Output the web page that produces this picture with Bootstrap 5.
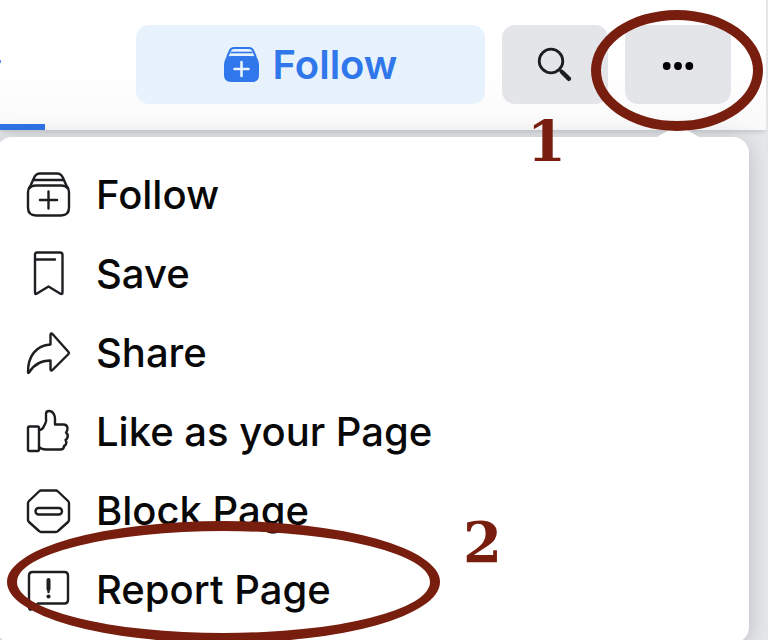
<!DOCTYPE html>
<html lang="en">
<head>
<meta charset="utf-8">
<meta name="viewport" content="width=device-width, initial-scale=1">
<title>Report a Page</title>
<link href="https://cdn.jsdelivr.net/npm/bootstrap@5.3.0/dist/css/bootstrap.min.css" rel="stylesheet">
<style>
  body { font-family: Inter, "Liberation Sans", sans-serif; background: #fff; color: #080809; }
  .shot { border-right: 2px solid #e4e5e8; margin-right: 3px; background: #e7e8ec; }
  .topbar { background: linear-gradient(#fff 55%, #f9f9f9); padding-right: 35px; box-shadow: 0 1px 6px rgba(0,0,0,.2); }
  .tab-current { width: 45px; border-bottom: 6px solid #2f74e6; }
  .tab-current::before { content: ""; width: 1px; height: 3px; margin-top: 60px; background: #5c92ec; }
  .actions { gap: 17px; padding: 25px 0 26px; margin-left: 91px; }
  .action { height: 79px; border: 0; border-radius: 13px; background: #e4e5e9; color: #080809; padding: 0; }
  .action-sm { width: 106px; }
  .action-follow { background: #e7f2fd; color: #2f77ea; font-size: 40px; font-weight: 600; line-height: 48px; gap: 14px; }
  .stage { padding: 7px 17px 20px 0; }
  .panel { background: #fff; border-radius: 16px; padding: 18px 0 14px; margin-left: -4px; box-shadow: 0 4px 24px rgba(0,0,0,.2); }
  .pointer { right: 50px; top: -11px; width: 42px; height: 11px; background: #fff; clip-path: polygon(50% 0, 60% 12%, 100% 100%, 0 100%, 40% 12%); }
  .entry { height: 79px; padding: 0 28px; gap: 24px; border: 0; background: none; color: #080809; font-size: 40px; font-weight: 500; line-height: 48px; }
  .entry svg { flex: none; fill: none; stroke: #1c1e21; stroke-width: 2.4; stroke-linejoin: round; stroke-linecap: round; }
  .ring { border: 10px solid #781e0f; border-radius: 50%; pointer-events: none; z-index: 3; }
  .ring-more { left: -34px; top: -15px; width: 172px; height: 121px; }
  .ring-report { left: 11px; top: -29px; width: 433px; height: 122px; }
  .step { color: #781e0f; font-family: "DejaVu Serif", serif; font-weight: 700; font-size: 56px; line-height: 56px; z-index: 3; }
  .step-one { left: -98px; top: 88px; }
  .step-two { left: 467px; top: -36px; }
</style>
</head>
<body class="overflow-hidden vh-100">
<div class="shot overflow-hidden min-vh-100">
  <header class="topbar d-flex position-relative">
    <a href="#" class="tab-current d-flex" aria-label="Current tab"></a>
    <div class="actions d-flex flex-grow-1">
      <button type="button" class="action action-follow flex-grow-1 d-flex align-items-center justify-content-center">
        <svg width="35" height="36" viewBox="0 0 35 36" aria-hidden="true">
          <path d="M3.5 9 6 3.5Q7.200 1 10 1H25Q27.800 1 29 3.500L31.500 9" fill="none" stroke="currentColor" stroke-width="2"/>
          <path d="M6.500 5.500H28.500" stroke="currentColor" stroke-width="1.600"/>
          <path d="M3.500 7.200H31.500L34 13Q35 15 35 18V28Q35 35 28 35H7Q0 35 0 28V18Q0 15 1 13Z" fill="currentColor"/>
          <path d="M5 8.500Q6 8 8 8H27Q29 8 30 8.500" stroke="#e7f2fd" stroke-width="1.800" fill="none"/>
          <path d="M10.500 22H24.500M17.500 15V29" stroke="#e7f2fd" stroke-width="2.600" stroke-linecap="round"/>
        </svg>
        <span>Follow</span>
      </button>
      <button type="button" class="action action-sm" aria-label="Search">
        <svg width="36" height="36" viewBox="0 0 36 36" fill="none" stroke="#1c1e21" stroke-linecap="round" aria-hidden="true">
          <circle cx="14" cy="14" r="11.800" stroke-width="2.800"/>
          <path d="M22.500 22.500 25 25" stroke-width="3"/><path d="M25 25 32 31.800" stroke-width="4.400"/>
        </svg>
      </button>
      <div class="position-relative">
        <button type="button" class="action action-sm" aria-label="More options">
          <svg width="32" height="10" viewBox="0 0 32 10" aria-hidden="true"><circle cx="4.700" cy="5" r="3.900"/><circle cx="16" cy="5" r="3.900"/><circle cx="27.300" cy="5" r="3.900"/></svg>
        </button>
        <span class="ring ring-more position-absolute"></span>
        <span class="step step-one position-absolute">1</span>
      </div>
    </div>
  </header>

  <main class="stage">
    <div class="panel position-relative">
      <span class="pointer position-absolute"></span>
      <button type="button" class="entry w-100 d-flex align-items-center text-start">
        <svg width="48" height="48" viewBox="0 0 48 48" aria-hidden="true">
          <path d="M5.500 17 10.200 6.500Q12 2.500 16 2.500H33Q37 2.500 38.800 6.500L43.500 17"/>
          <path d="M9.500 9H39.500"/>
          <path d="M5.500 17Q7.500 14.500 12 14.500H37Q41.500 14.500 43.500 17"/>
          <path d="M5.500 16Q4 18.500 4 21.500V36.500Q4 44.500 12 44.500H37Q45 44.500 45 36.500V21.500Q45 18.500 43.500 16"/>
          <path d="M16 29H33M24.500 20.500V37.500"/>
        </svg><span>Follow</span>
      </button>
      <button type="button" class="entry w-100 d-flex align-items-center text-start">
        <svg width="48" height="48" viewBox="0 0 48 48" aria-hidden="true">
          <path d="M13 2.500H36Q38.500 2.500 38.500 5V42.500Q38.500 45 36 43.500L24.500 36.500 13 43.500Q11 45 11 42.500V4.500Q11 2.500 13 2.500ZM11 9.500H31"/>
        </svg><span>Save</span>
      </button>
      <button type="button" class="entry w-100 d-flex align-items-center text-start">
        <svg width="48" height="48" viewBox="0 0 48 48" aria-hidden="true">
          <path d="M26.500 5.500V15.500C12 16.500 4 27 4 43Q4 45 5.500 43C10.500 34.500 17 31.500 26.500 31.500V40.500Q27 42.500 28.500 41L44.500 25Q45.500 24 44.500 23L28.500 5Q27 3.500 26.500 5.500Z"/>
        </svg><span>Share</span>
      </button>
      <button type="button" class="entry w-100 d-flex align-items-center text-start">
        <svg width="48" height="48" viewBox="0 0 48 48" aria-hidden="true">
          <rect x="4" y="18.500" width="11" height="24.500" rx="1.500"/>
          <path d="M15 22Q18.500 22 20 18L21.500 15Q22.500 13 22 10V6Q22 3 25 3C29.500 3 31 8 31 11V16.500H39Q43.500 16.500 43.500 20.500Q43.500 23 42 24.500Q44.500 26.500 43.500 29.500Q43 31 41.500 32Q43 34 42 36Q41.500 37.500 40 38Q40 41.500 36.500 41.500H22Q17.500 41.500 15 39"/>
        </svg><span>Like as your Page</span>
      </button>
      <button type="button" class="entry w-100 d-flex align-items-center text-start">
        <svg width="48" height="48" viewBox="0 0 48 48" aria-hidden="true">
          <path d="M17 3.500H32Q33 3.500 34 4.500L44 14Q45 15 45 16V33Q45 34 44 35L34 44Q33 45 32 45H17Q16 45 15 44L5 35Q4 34 4 33V16Q4 15 5 14L15 4.500Q16 3.500 17 3.500Z"/>
          <rect x="11.500" y="21" width="26.500" height="6.500" rx="3.200"/>
        </svg><span>Block Page</span>
      </button>
      <div class="position-relative">
        <button type="button" class="entry w-100 d-flex align-items-center text-start">
          <svg width="48" height="48" viewBox="0 0 48 48" aria-hidden="true">
            <path d="M8.500 6H40.500Q44 6 44 9.500V34Q44 37.500 40.500 37.500H14L8 43Q5 45 5 41V9.500Q5 6 8.500 6Z"/>
            <path d="M24.500 14V23" stroke-width="4"/><path d="M24.500 18V26" stroke-width="2.400"/><circle cx="24.500" cy="30.500" r="1" stroke-width="2.200"/>
          </svg><span>Report Page</span>
        </button>
        <span class="ring ring-report position-absolute"></span>
        <span class="step step-two position-absolute">2</span>
      </div>
    </div>
  </main>
</div>
<script src="https://cdn.jsdelivr.net/npm/bootstrap@5.3.0/dist/js/bootstrap.bundle.min.js"></script>
</body>
</html>
